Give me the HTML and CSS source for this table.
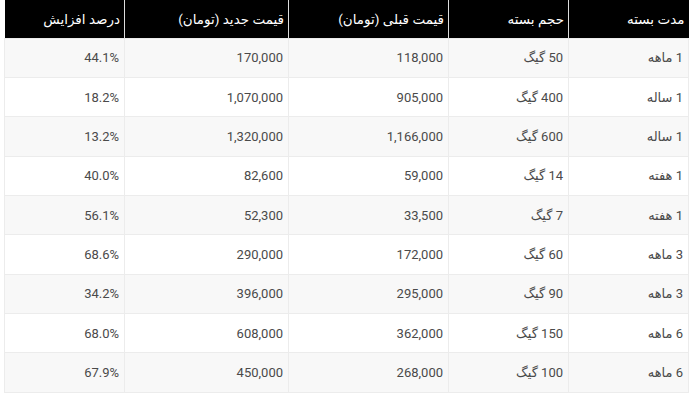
FILE: index.html
```html
<!DOCTYPE html>
<html lang="fa" dir="rtl">
<head>
<meta charset="utf-8">
<link rel="stylesheet" href="styles.css">
</head>
<body>
<div class="wrap">
<table class="prices">
<colgroup>
<col class="c1"><col class="c2"><col class="c3"><col class="c4"><col class="c5">
</colgroup>
<thead>
<tr><th>مدت بسته</th><th>حجم بسته</th><th>قیمت قبلی (تومان)</th><th>قیمت جدید (تومان)</th><th>درصد افزایش</th></tr>
</thead>
<tbody>
<tr><td>1 ماهه</td><td>50 گیگ</td><td>118,000</td><td>170,000</td><td>44.1%</td></tr>
<tr><td>1 ساله</td><td>400 گیگ</td><td>905,000</td><td>1,070,000</td><td>18.2%</td></tr>
<tr><td>1 ساله</td><td>600 گیگ</td><td>1,166,000</td><td>1,320,000</td><td>13.2%</td></tr>
<tr><td>1 هفته</td><td>14 گیگ</td><td>59,000</td><td>82,600</td><td>40.0%</td></tr>
<tr><td>1 هفته</td><td>7 گیگ</td><td>33,500</td><td>52,300</td><td>56.1%</td></tr>
<tr><td>3 ماهه</td><td>60 گیگ</td><td>172,000</td><td>290,000</td><td>68.6%</td></tr>
<tr><td>3 ماهه</td><td>90 گیگ</td><td>295,000</td><td>396,000</td><td>34.2%</td></tr>
<tr><td>6 ماهه</td><td>150 گیگ</td><td>362,000</td><td>608,000</td><td>68.0%</td></tr>
<tr><td>6 ماهه</td><td>100 گیگ</td><td>268,000</td><td>450,000</td><td>67.9%</td></tr>
</tbody>
</table>
</div>
</body>
</html>
```
FILE: styles.css
```css
html, body {
  margin: 0;
  padding: 0;
  background: #fff;
}
.wrap {
  padding: 0 3px 0 5px;
}
.prices {
  width: 684px;
  table-layout: fixed;
  border-collapse: collapse;
  font-family: Roboto, "DejaVu Sans", sans-serif;
  font-size: 13px;
  color: #4a4a4a;
}
.c1 { width: 120px; }
.c2 { width: 120px; }
.c3 { width: 160px; }
.c4 { width: 164px; }
.c5 { width: 120px; }
.prices th {
  background: #000;
  color: #fff;
  font-weight: normal;
  font-size: 13.5px;
  height: 38px;
  padding: 0 4px 0 4px;
  text-align: right;
  border-left: 1px solid #ddd;
  box-sizing: border-box;
}
.prices th:last-child { border-left: none; }
.prices td {
  height: 39.35px;
  padding: 0 5px;
  text-align: right;
  border: 1px solid #ececec;
  box-sizing: border-box;
}
.prices tbody tr:nth-child(odd) td { background: #f8f8f8; }
.prices tbody tr:nth-child(even) td { background: #fff; }
```
